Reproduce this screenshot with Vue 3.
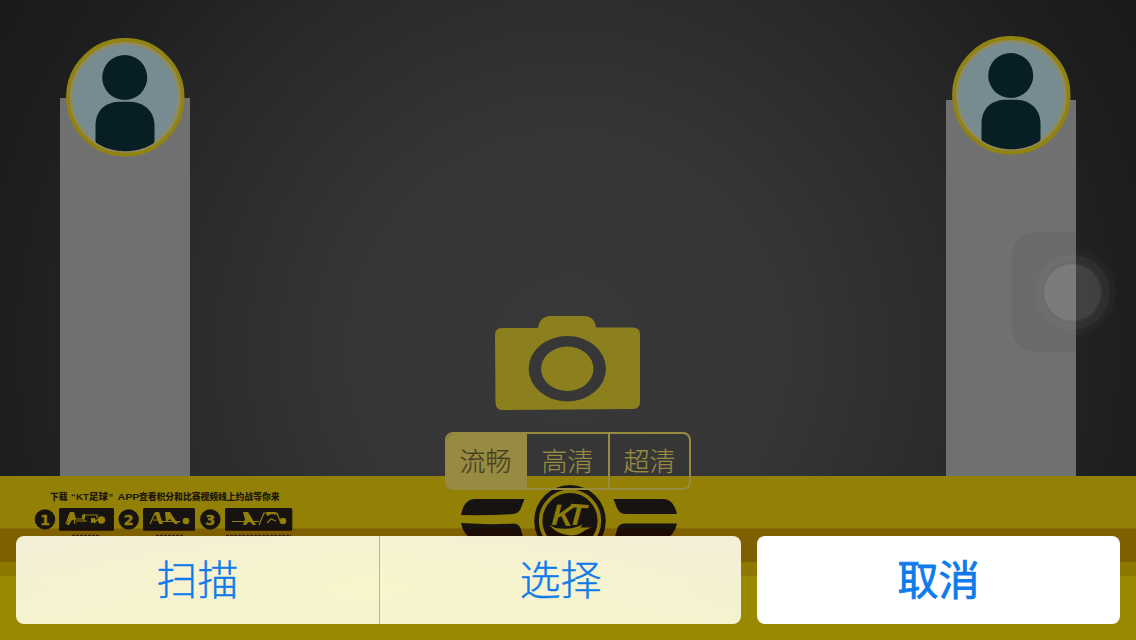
<script setup>
const players = ['left', 'right']
const qualities = ['流畅', '高清', '超清']
const actions = ['扫描', '选择']
const steps = [
  { n: 1, cx: 45, x: 59, w: 55 },
  { n: 2, cx: 128.7, x: 143, w: 52 },
  { n: 3, cx: 210.3, x: 225, w: 67.3 }
]
</script>

<template>
  <div class="screen">
    <main class="court">
      <section v-for="side in players" :key="side" class="player" :class="side">
        <svg class="avatar" viewBox="0 0 120 120">
          <defs>
            <clipPath :id="'clip-' + side"><circle cx="60.300" cy="60.300" r="54" /></clipPath>
          </defs>
          <circle cx="60.300" cy="60.300" r="57.300" fill="#8f8a60" stroke="#918312" stroke-width="3.800" />
          <circle cx="60" cy="60.300" r="52.500" fill="#778c90" />
          <circle cx="59.700" cy="40.500" r="22.500" fill="#081e25" />
          <path :clip-path="`url(#clip-${side})`" d="M30.500 104V88C31 72 42 64.800 55 64.800H64C79 64.800 89 74 89.500 88V104L84 120H36Z" fill="#081e25" />
        </svg>
      </section>
      <section class="capture">
        <svg class="camera" viewBox="0 0 145 95">
          <path fill="#8c801e" d="M7 13H43C44 5 49 1 56 1H89C96 1 100 5 101 12.500H138Q145 12.500 145 19V87Q145 94 138 94L7 95Q1 95 .5 88L0 20Q0 13 7 13Z" />
          <ellipse cx="72.300" cy="53.700" rx="38.700" ry="32.700" fill="#373737" />
          <ellipse cx="72.300" cy="53.700" rx="26.200" ry="22.200" fill="#8c801e" />
        </svg>
        <div class="segmented">
          <span v-for="(q, i) in qualities" :key="q" class="segment" :class="{ active: i === 0 }">{{ q }}</span>
        </div>
      </section>
    </main>

    <footer class="floor">
      <svg class="print" viewBox="0 476 1136 164">
        <defs>
          <linearGradient id="ink" gradientUnits="userSpaceOnUse" x1="0" y1="476" x2="0" y2="576">
            <stop offset=".52" stop-color="#171310" />
            <stop offset=".54" stop-color="#1d0b06" />
          </linearGradient>
        </defs>
        <g class="note">
          <text x="50" y="500.300" textLength="17.500" lengthAdjust="spacingAndGlyphs">下载</text>
          <text x="71" y="500.300">“</text>
          <text x="76" y="500.300" textLength="32" lengthAdjust="spacingAndGlyphs">KT足球</text>
          <text x="108.500" y="500.300">”</text>
          <text x="117.500" y="500.300" textLength="22" lengthAdjust="spacingAndGlyphs">APP</text>
          <text x="139" y="500.300" textLength="140.500" lengthAdjust="spacingAndGlyphs">查看积分和比赛视频线上约战等你来</text>
        </g>
        <g v-for="s in steps" :key="s.n">
          <circle :cx="s.cx" cy="519.400" r="10.200" fill="url(#ink)" />
          <text class="digit" :x="s.cx" y="524.500" text-anchor="middle">{{ s.n }}</text>
          <rect :x="s.x" y="508" :width="s.w" height="22.800" rx="1.500" fill="url(#ink)" />
        </g>
        <g class="figure">
          <path d="M66 524l4-11M73 512l2 12M69 519h15M76 521h11M84 521v-6h13v3M94 523l4-4" />
          <path class="solid" d="M70 512h4l2 7-4 1-3 5h-2zM82 515l3-1v4l-3 1zM91 518h4l1 4-5 1z" />
          <circle cx="101.500" cy="520" r="3.700" />
          <path d="M150 524l5-11M155 513l5 11M153 520h6M158 521.500h17" />
          <path class="solid" d="M155 512h4l4 12h-3l-4-9zM165 512h5l8 12h-3l-5-5-4 3zM174 521h6v1.500h-6z" />
          <circle cx="186" cy="521" r="3.300" />
          <path d="M232 521.500h27M259 525l5-12h13l3 8M267 523l4-4 5 2" />
          <path class="solid" d="M243 512h5l8 13h-3l-4-4-3 4h-3l2-6zM266 512h9l3 3-6-1-5 2z" />
          <circle cx="283" cy="521" r="3.300" />
        </g>
        <g class="fineprint">
          <path d="M72 535.500h27M156 535.500h27M226 535.500h65" />
        </g>
        <g fill="url(#ink)">
          <path d="M461 515C463 505 467 499 475 499H524.500L521 508Q519 513.500 513 514Q490 515.500 461 515ZM461 523Q490 525 514 523.500Q519 524 520.500 528L524 540H475Q463 536 461 523Z" />
          <path transform="translate(1138 0) scale(-1 1)" d="M461 514.500C463 505 467 499 475 499H524.500L521 508Q519 513.500 513 514H461ZM461 523.500H514Q519 524 520.500 528L524 540H475Q463 536 461 523Z" />
          <circle cx="570" cy="520.700" r="35.800" />
        </g>
        <circle cx="570" cy="520.700" r="29.400" fill="none" stroke="#8d7b08" stroke-width="3.600" />
        <g transform="rotate(4 570 516)">
          <text class="kt" x="552" y="526">K</text>
          <text class="kt" x="567.500" y="524.500">T</text>
        </g>
        <path fill="#8d7b08" d="M549.500 525q6 4 12 3.500 8 1 15-1.500l6-2.500-2 3 11 0q-6 2-9 4.500-5 3.500-12 3.500-14-1-21-10.500z" />
      </svg>
    </footer>

    <div class="assist"><i></i></div>

    <div class="sheet">
      <div class="group">
        <button v-for="a in actions" :key="a">{{ a }}</button>
      </div>
      <button class="cancel">取消</button>
    </div>
  </div>
</template>

<style>
body { margin: 0; overflow: hidden; }
</style>

<style scoped>
.screen {
  position: relative;
  width: 1136px;
  height: 640px;
  overflow: hidden;
  background: radial-gradient(circle 640px at 568px 350px, #383838 0%, #353535 35%, #292929 65%, #1e1e1e 88%, #1b1b1b 100%);
  font-family: "Liberation Sans", "Noto Sans CJK SC", sans-serif;
}
.court {
  display: grid;
  grid-template-columns: 130px 1fr 130px;
  height: 476px;
  padding: 0 60px;
}
.player {
  grid-row: 1;
  display: flex;
  justify-content: center;
  align-items: flex-start;
  background: linear-gradient(#707070, #707070) 0 98px no-repeat;
}
.player.left { grid-column: 1; padding-top: 37px; }
.player.right { grid-column: 3; padding-top: 35px; background-position: 0 100px; }
.avatar { width: 120px; height: 120px; }
.capture {
  grid-column: 2;
  grid-row: 1;
  position: relative;
  z-index: 2;
  display: flex;
  flex-direction: column;
  align-items: center;
  gap: 22px;
  padding-top: 315px;
  height: 161px;
}
.camera { flex: none; width: 145px; height: 95px; margin-right: 2px; }
.segmented {
  flex: none;
  box-sizing: border-box;
  display: grid;
  grid-template-columns: 80px 81px 81px;
  width: 246px;
  height: 58px;
  border: 2px solid #978b42;
  border-radius: 8px;
  overflow: hidden;
}
.segment {
  display: flex;
  align-items: center;
  justify-content: center;
  padding-bottom: 4px;
  font-size: 26px;
  font-weight: 300;
  color: #978b42;
  -webkit-text-stroke: .2px currentColor;
}
.segment + .segment + .segment { border-left: 2px solid #978b42; }
.segment.active { padding-right: 3px; background: #978b42; color: #45401f; }
.floor {
  height: 164px;
  background: linear-gradient(#928007 0 52px, #877002 52px 53px, #7f6000 53px 86px, #8e7900 86px 100px, #988900 100px);
}
.print { display: block; width: 1136px; height: 164px; }
.note { font-size: 9px; font-weight: 900; fill: #1d180b; }
.digit { font-family: "DejaVu Sans", sans-serif; font-size: 14px; font-weight: 700; fill: #928007; stroke: #928007; stroke-width: .4; }
.figure { fill: #928007; }
.figure path { fill: none; stroke: #928007; stroke-width: 1.2; }
.figure .solid { fill: #928007; stroke: none; }
.fineprint { fill: none; stroke: #392008; stroke-width: 1.5; stroke-dasharray: 3 1; }
.kt { font-family: "Liberation Sans", sans-serif; font-size: 30px; font-weight: 700; font-style: italic; fill: #8d7b08; }
.assist {
  position: absolute;
  left: 1012px;
  top: 232px;
  width: 120px;
  height: 120px;
  border-radius: 24px;
  display: grid;
  place-items: center;
  background: rgba(32, 32, 32, .08);
}
.assist i {
  width: 57px;
  height: 57px;
  border-radius: 50%;
  background: rgba(195, 195, 195, .2);
  box-shadow: 0 0 0 2px rgba(90, 90, 90, .12), 0 0 0 9px rgba(150, 150, 150, .08), 0 0 0 15px rgba(130, 130, 130, .05);
}
.sheet {
  position: absolute;
  z-index: 3;
  left: 16px;
  right: 16px;
  bottom: 16px;
  height: 88px;
  display: flex;
  gap: 16px;
}
.group {
  width: 725px;
  display: flex;
  border-radius: 8px;
  overflow: hidden;
  background: radial-gradient(ellipse 380px 80px at 350px 50px, rgba(248, 246, 204, .9), rgba(247, 243, 208, 0)), linear-gradient(#f4eed7, #f5f3cf);
}
button {
  flex: 1;
  padding: 0 0 5px;
  border: 0;
  background: none;
  font-family: "Noto Sans CJK SC", sans-serif;
  font-size: 41px;
  font-weight: 300;
  line-height: 1;
  color: #0f7bea;
  -webkit-text-stroke: .4px currentColor;
}
.group button:first-child { flex: none; width: 363px; }
.group button + button { border-left: 1px solid #ccbd38; }
.cancel { border-radius: 8px; background: #fff; font-weight: 400; -webkit-text-stroke-width: .8px; }
</style>
